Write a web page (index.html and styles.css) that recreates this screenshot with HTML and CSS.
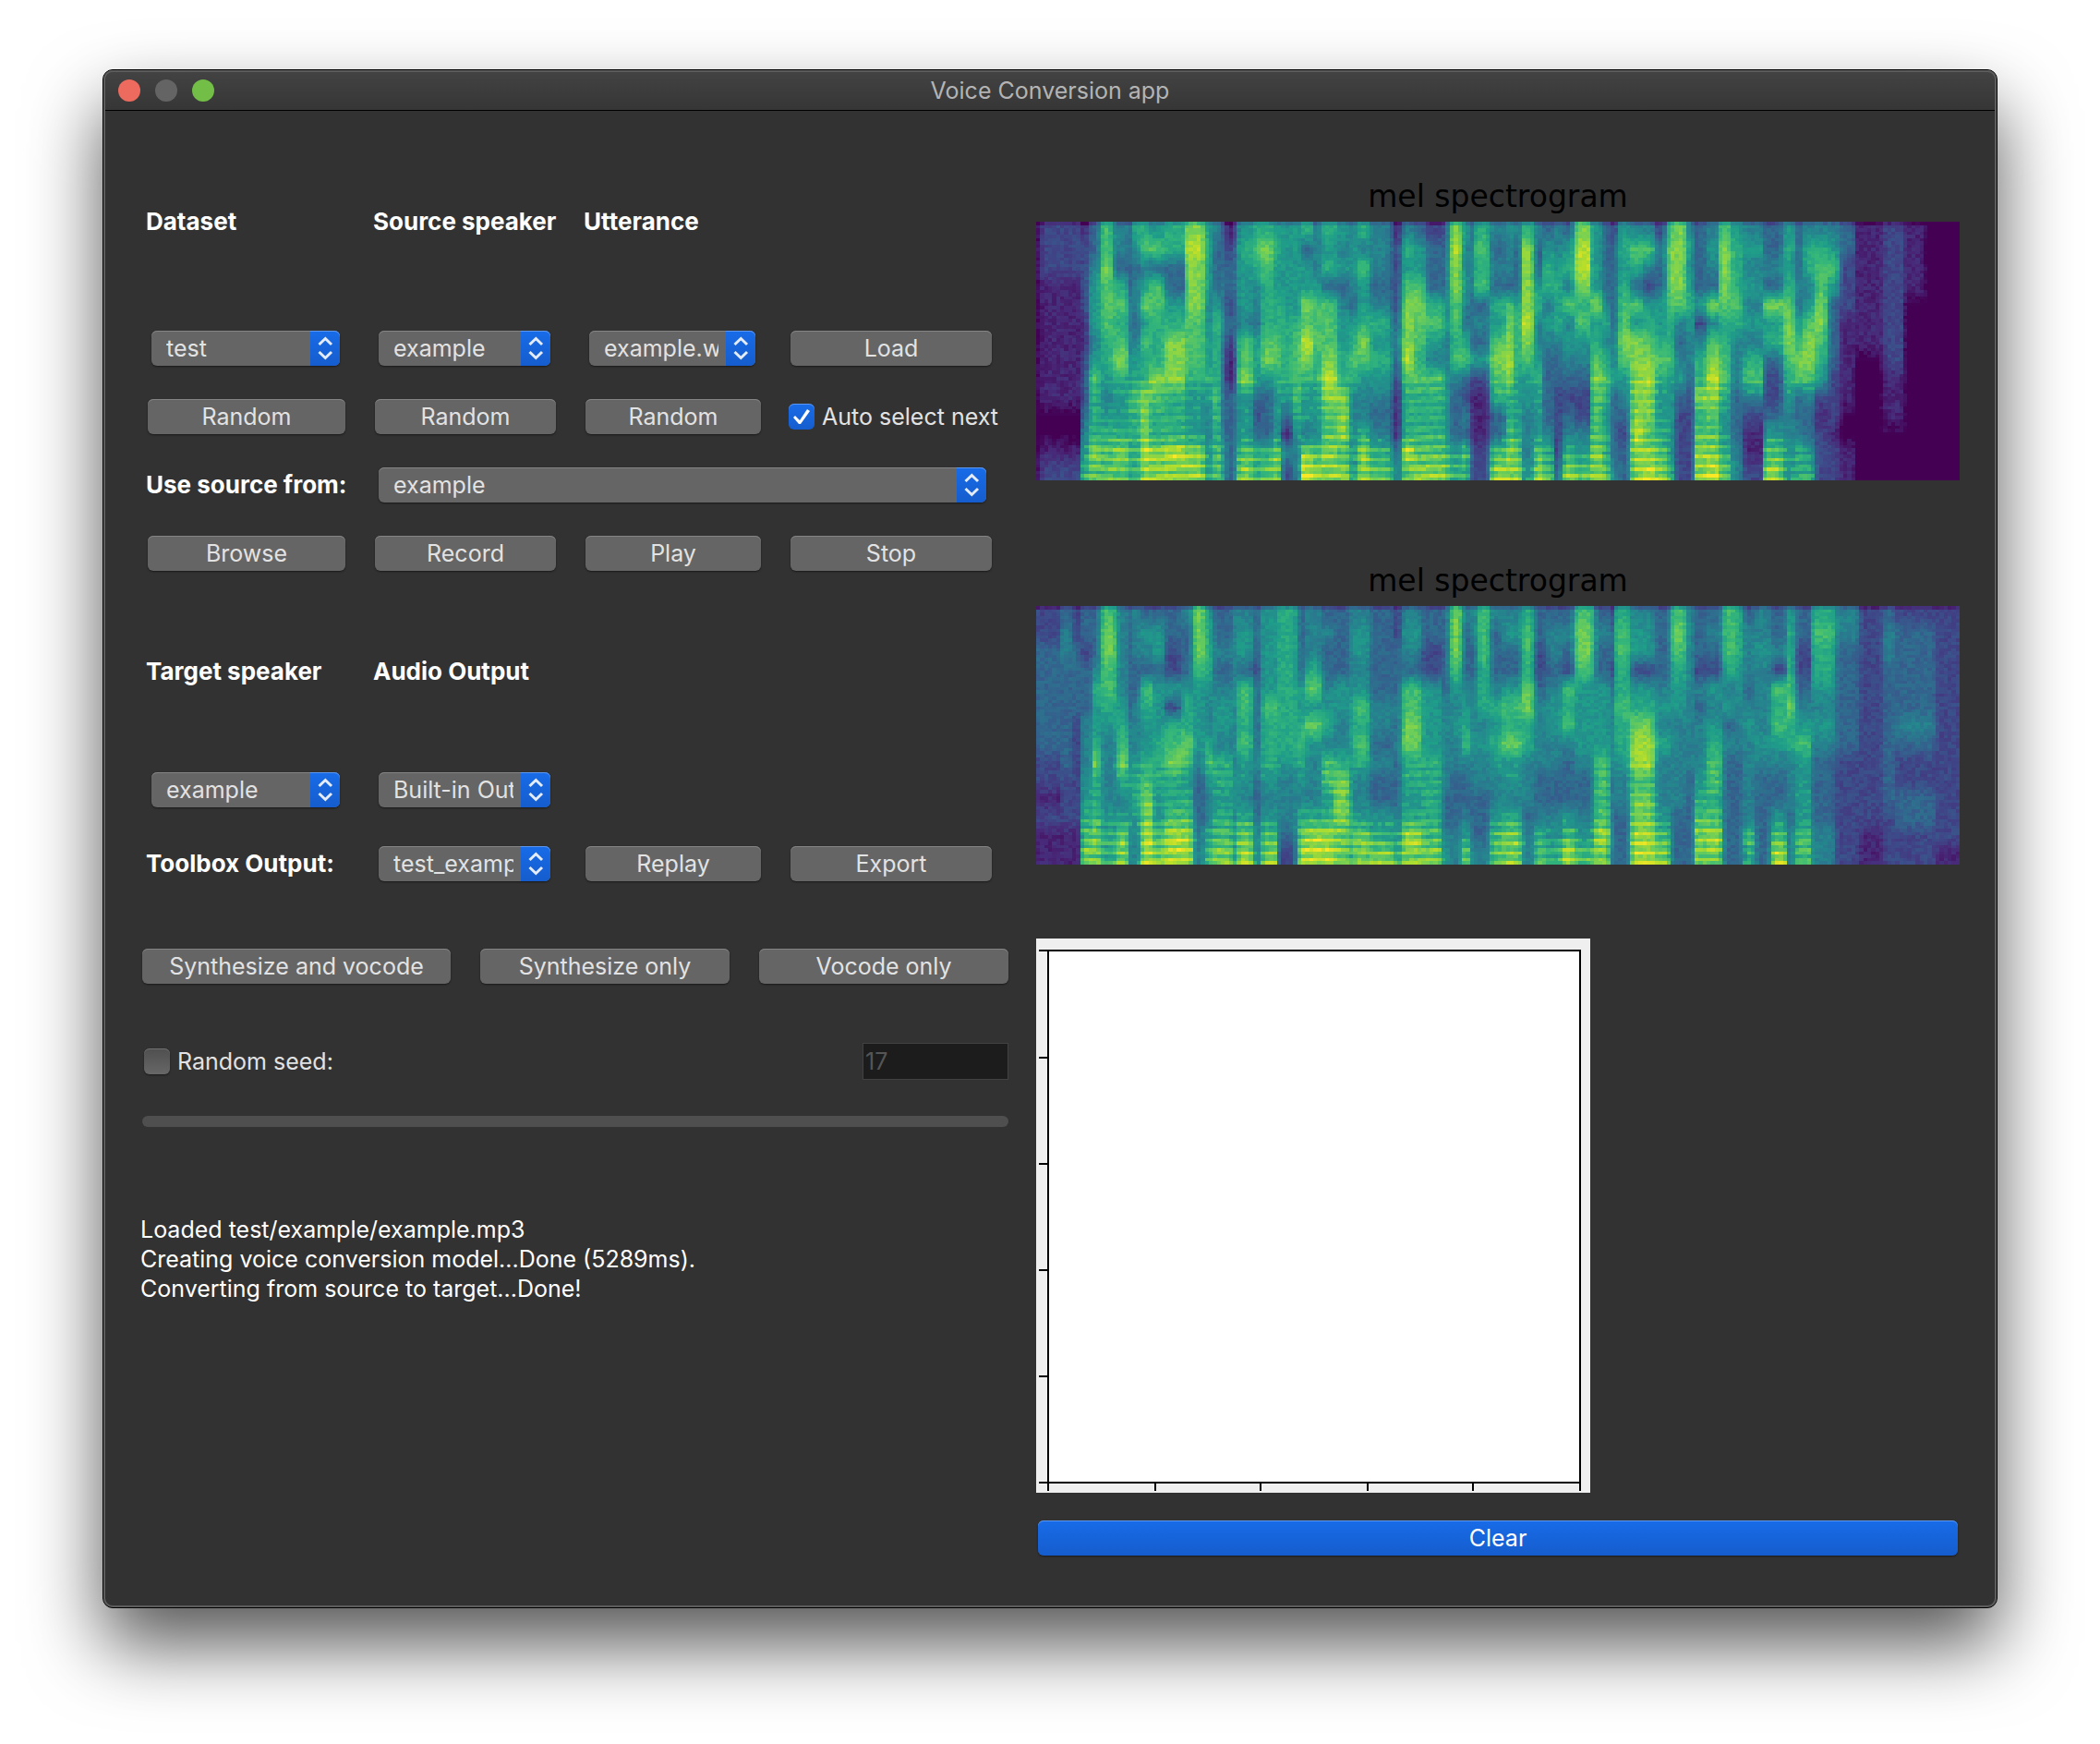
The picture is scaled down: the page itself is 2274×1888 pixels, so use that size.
FILE: index.html
```html
<!DOCTYPE html>
<html lang="en">
<head>
<meta charset="utf-8">
<title>Voice Conversion app</title>
<link rel="stylesheet" href="styles.css">
</head>
<body>
<svg class="defs" aria-hidden="true">
  <symbol id="stepper" viewBox="0 0 32 38">
    <path d="M9.5 15 L16.3 8.5 L23 15 M9.5 23 L16.3 29.5 L23 23" fill="none" stroke="#e4ecfb" stroke-width="3"/>
  </symbol>
</svg>
<div class="window">
  <header class="titlebar">
    <div class="lights">
      <button class="light close" type="button" aria-label="Close"></button>
      <button class="light minimize" type="button" aria-label="Minimize"></button>
      <button class="light zoom" type="button" aria-label="Zoom"></button>
    </div>
    <h1 class="title">Voice Conversion app</h1>
  </header>
  <main class="content">
    <section class="controls">
      <div class="fields source-fields">
        <label class="heading" for="dataset">Dataset</label>
        <label class="heading" for="speaker">Source speaker</label>
        <label class="heading span-rest" for="utterance">Utterance</label>

        <span class="combo"><select id="dataset"><option>test</option></select><svg class="stepper"><use href="#stepper"/></svg></span>
        <span class="combo"><select id="speaker"><option>example</option></select><svg class="stepper"><use href="#stepper"/></svg></span>
        <span class="combo"><select id="utterance"><option>example.wav</option></select><svg class="stepper"><use href="#stepper"/></svg></span>
        <button class="btn" type="button">Load</button>

        <button class="btn" type="button">Random</button>
        <button class="btn" type="button">Random</button>
        <button class="btn" type="button">Random</button>
        <label class="check"><input type="checkbox" checked>Auto select next</label>

        <label class="side-label" for="source">Use source from:</label>
        <span class="combo span-rest"><select id="source"><option>example</option></select><svg class="stepper"><use href="#stepper"/></svg></span>

        <button class="btn" type="button">Browse</button>
        <button class="btn" type="button">Record</button>
        <button class="btn" type="button">Play</button>
        <button class="btn" type="button">Stop</button>
      </div>

      <div class="fields output-fields">
        <label class="heading" for="target">Target speaker</label>
        <label class="heading span-rest" for="audio">Audio Output</label>

        <span class="combo"><select id="target"><option>example</option></select><svg class="stepper"><use href="#stepper"/></svg></span>
        <span class="combo"><select id="audio"><option>Built-in Output</option></select><svg class="stepper"><use href="#stepper"/></svg></span>

        <label class="side-label new-row" for="toolbox">Toolbox Output:</label>
        <span class="combo"><select id="toolbox"><option>test_example</option></select><svg class="stepper"><use href="#stepper"/></svg></span>
        <button class="btn" type="button">Replay</button>
        <button class="btn" type="button">Export</button>
      </div>

      <div class="actions">
        <button class="btn" type="button">Synthesize and vocode</button>
        <button class="btn" type="button">Synthesize only</button>
        <button class="btn" type="button">Vocode only</button>
      </div>

      <div class="seed">
        <label class="check"><input type="checkbox">Random seed:</label>
        <input class="seed-value" type="text" value="17" aria-label="Seed value" disabled>
      </div>

      <progress class="progress" value="0" max="100" aria-label="Progress"></progress>

      <div class="log" role="log">
        <p>Loaded test/example/example.mp3</p>
        <p>Creating voice conversion model...Done (5289ms).</p>
        <p>Converting from source to target...Done!</p>
      </div>
    </section>

    <section class="plots">
      <figure class="spectrogram">
        <figcaption>mel spectrogram</figcaption>
        <canvas id="source-mel" width="230" height="80"></canvas>
      </figure>
      <figure class="spectrogram">
        <figcaption>mel spectrogram</figcaption>
        <canvas id="target-mel" width="230" height="80"></canvas>
      </figure>
      <svg class="embedding" viewBox="0 0 600 600" role="img" aria-label="Embedding plot">
        <rect width="600" height="600" fill="#efefef"/>
        <rect x="13" y="13" width="576" height="576" fill="#fff"/>
        <path d="M13 13V598 M589 13V598 M3 13H590 M3 589H590 M3 129H13 M3 244H13 M3 359H13 M3 474H13 M129 589V598 M243 589V598 M359 589V598 M473 589V598" fill="none" stroke="#000" stroke-width="2"/>
      </svg>
      <button class="btn primary" type="button">Clear</button>
    </section>
  </main>
</div>
<script src="spectrogram.js"></script>
</body>
</html>
```
FILE: styles.css
```css
* { box-sizing: border-box; }

body {
  margin: 0;
  padding: 75px 111px 147px;
  background: #fff;
  font-family: Inter, "Liberation Sans", sans-serif;
  font-size: 25px;
  line-height: 32px;
  color: #e2e2e2;
}

button, select, input { font: inherit; color: inherit; }
h1, p, figure { margin: 0; }
.defs { position: absolute; width: 0; height: 0; }

.window {
  position: relative;
  border: 1px solid #000;
  border-radius: 11px;
  background: #323232;
  box-shadow: 0 40px 80px rgba(0, 0, 0, .66);
}

/* Light rim just inside the black outline */
.window::after {
  content: "";
  position: absolute;
  inset: 0;
  border-radius: 10px;
  box-shadow: inset 0 0 0 2px #5c5c5c;
  pointer-events: none;
}

.titlebar {
  display: grid;
  grid-template-columns: 1fr auto 1fr;
  align-items: center;
  height: 44px;
  padding: 0 16px;
  border-bottom: 1px solid #000;
  border-radius: 10px 10px 0 0;
  background: linear-gradient(#434343, #363636);
}

.lights { display: flex; gap: 16px; }
.light { width: 24px; height: 24px; padding: 0; border: 0; border-radius: 50%; }
.close { background: #ed6a5e; }
.minimize { background: #646464; }
.zoom { background: #72be47; }
.title { font-size: 25px; font-weight: 400; color: #b4b4b4; }

.content {
  display: grid;
  grid-template-columns: minmax(0, 938fr) minmax(0, 1000fr);
  gap: 30px;
  padding: 73px 40px 56px 42px;
}

.controls { display: flex; flex-direction: column; padding-top: 31px; }

.fields {
  display: grid;
  grid-template-columns: minmax(0, 214fr) minmax(0, 196fr) minmax(0, 190fr) minmax(0, 218fr);
  column-gap: 32px;
  row-gap: 36px;
  padding: 0 18px 0 6px;
  white-space: nowrap;
}
.output-fields { row-gap: 42px; margin-top: 93px; }
.span-rest { grid-column-end: -1; }
.source-fields .heading { padding-bottom: 66px; }
.output-fields .heading { padding-bottom: 51px; }
.new-row { grid-column-start: 1; }
.heading, .side-label { margin-left: -2px; font-size: 26px; font-weight: 700; color: #fff; }
.side-label { line-height: 38px; }
.heading.span-rest { grid-column-start: 3; }
.output-fields .heading.span-rest, .combo.span-rest { grid-column-start: 2; }

.btn {
  height: 38px;
  padding: 0;
  border: 0;
  border-radius: 6px;
  background: #656565;
  box-shadow: inset 0 1px #858585, 0 1px 2px rgba(0, 0, 0, .5);
  line-height: 38px;
  text-align: center;
}
.btn.primary {
  margin: 30px 2px 0;
  background: linear-gradient(#186be8, #155dcd);
  box-shadow: inset 0 1px #5c97f0, 0 1px 2px rgba(0, 0, 0, .5);
  color: #fff;
}

.combo {
  position: relative;
  display: flex;
  height: 38px;
  margin: 0 6px 0 4px;
}
.combo select {
  appearance: none;
  width: 100%;
  padding: 0 40px 0 16px;
  border: 0;
  border-radius: 6px;
  background: #656565;
  box-shadow: inset 0 1px #858585, 0 1px 2px rgba(0, 0, 0, .5);
  text-overflow: clip;
}
.stepper {
  position: absolute;
  top: 0;
  right: 0;
  width: 32px;
  height: 38px;
  border-radius: 0 6px 6px 0;
  background: linear-gradient(#186be8, #155dcd);
  box-shadow: inset 0 1px #5c97f0;
  pointer-events: none;
}

.check { display: flex; align-items: center; gap: 8px; margin-left: -2px; }
.check input {
  appearance: none;
  flex: none;
  width: 28px;
  height: 28px;
  margin: 0;
  border-radius: 6px;
  background: linear-gradient(#4f4f4f, #676767);
  box-shadow: inset 0 1px #707070, 0 1px 2px rgba(0, 0, 0, .5);
}
.check input:checked {
  display: grid;
  background: linear-gradient(#186be8, #155dcd);
  box-shadow: inset 0 1px #5c97f0;
}
.check input:checked::after {
  content: "";
  width: 28px;
  height: 28px;
  background: #fff;
  clip-path: polygon(5px 15px, 7px 13px, 12px 18px, 20px 6px, 23px 8px, 13px 22px, 11px 22px);
}

.actions {
  display: grid;
  grid-template-columns: minmax(0, 334fr) minmax(0, 270fr) minmax(0, 270fr);
  gap: 32px;
  margin-top: 73px;
}

.seed {
  display: flex;
  justify-content: space-between;
  align-items: center;
  margin-top: 64px;
}
.seed .check { margin-left: 2px; }
.seed-value {
  width: 158px;
  height: 40px;
  padding: 0 2px;
  border: 1px solid #414141;
  background: #1c1c1c;
  color: #555;
}

.progress {
  appearance: none;
  width: 100%;
  height: 12px;
  margin-top: 39px;
  border: 0;
  border-radius: 6px;
  background: #4f4f4f;
  overflow: hidden;
}
.progress::-webkit-progress-bar { background: #4f4f4f; }

.log { margin: 95px 0 0 -2px; color: #fff; }

.plots { display: flex; flex-direction: column; }
.spectrogram { display: flex; flex-direction: column; gap: 7px; }
.spectrogram + .spectrogram { margin-top: 89px; }
.spectrogram figcaption {
  font-family: "DejaVu Sans", sans-serif;
  font-size: 33px;
  line-height: 40px;
  text-align: center;
  color: #000;
}
.spectrogram canvas { width: 100%; height: 280px; image-rendering: pixelated; }
.embedding { width: 60%; margin-top: 80px; }
```
FILE: spectrogram.js
```js
// Each entry is [right edge in 0..1000, fourteen energy levels from high to low frequency].
const sourceMel = [
  [6,"00000000000000"],[50,"22211111110012"],[58,"12222112223456"],[69,"33455545766687"],[83,"77877766545677"],
  [98,"44367678655687"],[103,"33334445566666"],[112,"65344345676666"],[123,"67458576688898"],[138,"57377666876688"],
  [163,"66335688866698"],[181,"89888777655588"],[190,"56554455654455"],[201,"43335766677677"],[206,"33344544433466"],
  [216,"12332321133333"],[235,"56555477855578"],[245,"67644355532366"],[255,"68766678533367"],[265,"56556677655588"],
  [280,"55555666653142"],[285,"55555677776544"],[298,"63558798655489"],[310,"44457776655478"],[325,"65637778987788"],
  [338,"54534556688878"],[348,"45543567644455"],[361,"64755687544688"],[381,"44434656543467"],[386,"33333445433356"],
  [396,"12222343211134"],[408,"46578889766697"],[423,"35578776766678"],[443,"23336754766678"],[447,"33443433455567"],
  [461,"89887767433356"],[471,"54454367324376"],[476,"34443435211122"],[490,"67673435211122"],[508,"43436578763378"],
  [516,"54437889866788"],[524,"43335666555678"],[539,"68888987554445"],[550,"43356445655578"],[559,"35664543333467"],
  [568,"44565643322223"],[582,"35647454323468"],[602,"89986754322457"],[612,"55558567877788"],[623,"33334646765667"],
  [632,"23333344533334"],[642,"56567787543233"],[657,"47637588888988"],[669,"47425678988789"],[682,"24335567655678"],
  [693,"78887667555556"],[703,"88887434532222"],[711,"45456544322222"],[725,"33335246686788"],[741,"45438478987789"],
  [754,"78887667765567"],[766,"56667644433344"],[789,"45454546742112"],[809,"33438563223578"],[821,"56567887654455"],
  [832,"33343568733466"],[843,"46645788743356"],[855,"46778876521222"],[869,"45753333222122"],[885,"33222111110011"],
  [916,"11111110000000"],[941,"22222222111000"],[962,"11110000000000"],[1000,"00000000000000"]
];

const targetMel = [
  [28,"22333333221211"],[40,"34433333322211"],[50,"22333322222211"],[59,"33233344455678"],[70,"33346556866788"],
  [88,"78877654444566"],[98,"44444567864588"],[103,"33333344555555"],[112,"44433444566544"],[128,"35437655678899"],
  [138,"35535556665578"],[156,"33225267866799"],[168,"43335668756799"],[181,"88875555433344"],[191,"56665446754467"],
  [211,"33434554665678"],[218,"44444444455455"],[236,"45537767554689"],[245,"33323333433344"],[263,"55555766654578"],
  [281,"66666666544432"],[290,"33335567654689"],[308,"44468585444699"],[321,"34334564775699"],[338,"33335544688888"],
  [343,"44444555555666"],[361,"45545767644588"],[386,"33333443433568"],[396,"22333434333456"],[418,"45437788665698"],
  [440,"33225555666678"],[447,"33333444443345"],[461,"88875454433344"],[471,"43334567433468"],[477,"44334445443334"],
  [490,"77766645443334"],[505,"43334656544577"],[525,"45335768554688"],[539,"67768866444344"],[552,"33223444433467"],
  [568,"34434554433456"],[582,"34327674333579"],[603,"78875555433457"],[623,"34335555777798"],[628,"23323444433333"],
  [642,"67766766544333"],[668,"45525689978899"],[687,"33334546444578"],[705,"78765544444333"],[711,"44444444433333"],
  [727,"33324344456788"],[744,"34325456776798"],[755,"77764534333333"],[766,"66655444333333"],[778,"34443454444476"],
  [794,"44544445433333"],[811,"33427675433579"],[821,"56667866444344"],[841,"33223457555577"],[866,"67665454333344"],
  [891,"44333333222222"],[919,"22222222222211"],[932,"34433333333222"],[973,"23333343223322"],[1000,"22222222222221"]
];

const viridis = [
  [68,1,84],[72,40,120],[62,73,137],[49,104,142],[38,130,142],
  [31,158,137],[53,183,121],[110,206,88],[181,222,43],[253,231,37]
];

function levelAt(bands, x, y) {
  const levels = bands.find(band => x < band[0])[1];
  const pos = Math.min(13, Math.max(0, y * 14 - 0.5));
  const i = Math.floor(pos);
  const next = Math.min(13, i + 1);
  return +levels[i] + (levels[next] - levels[i]) * (pos - i);
}

// gain compresses the loud half of the scale
function draw(id, bands, seed, gain) {
  const canvas = document.getElementById(id);
  const { width, height } = canvas;
  const context = canvas.getContext("2d");
  const image = context.createImageData(width, height);
  let state = seed;
  const random = () => (state = (state * 16807) % 2147483647) / 2147483647;
  for (let row = 0; row < height; row++) {
    const y = (row + 0.5) / height;
    for (let col = 0; col < width; col++) {
      const x = (col + 0.5) * 1000 / width;
      const sides = levelAt(bands, Math.max(0, x - 4), y) + levelAt(bands, Math.min(999, x + 4), y);
      let v = levelAt(bands, x, y) * 0.6 + sides * 0.2;
      if (v > 4) v = 4 + (v - 4) * gain;
      if (v > 0.1) v += (random() - 0.55) * 0.8;
      if (y > 0.6 && v > 4.8) v += Math.sin(row * 2.1 + Math.sin(x / 22)) * (y > 0.82 ? 0.9 : 0.5);
      if (row === 0) v -= 1;
      v = Math.min(8.99, Math.max(0, v));
      const base = Math.floor(v);
      const offset = (row * width + col) * 4;
      for (let c = 0; c < 3; c++) {
        image.data[offset + c] = viridis[base][c] + (viridis[base + 1][c] - viridis[base][c]) * (v - base);
      }
      image.data[offset + 3] = 255;
    }
  }
  context.putImageData(image, 0, 0);
}

draw("source-mel", sourceMel, 41, 0.82);
draw("target-mel", targetMel, 97, 0.76);
```
